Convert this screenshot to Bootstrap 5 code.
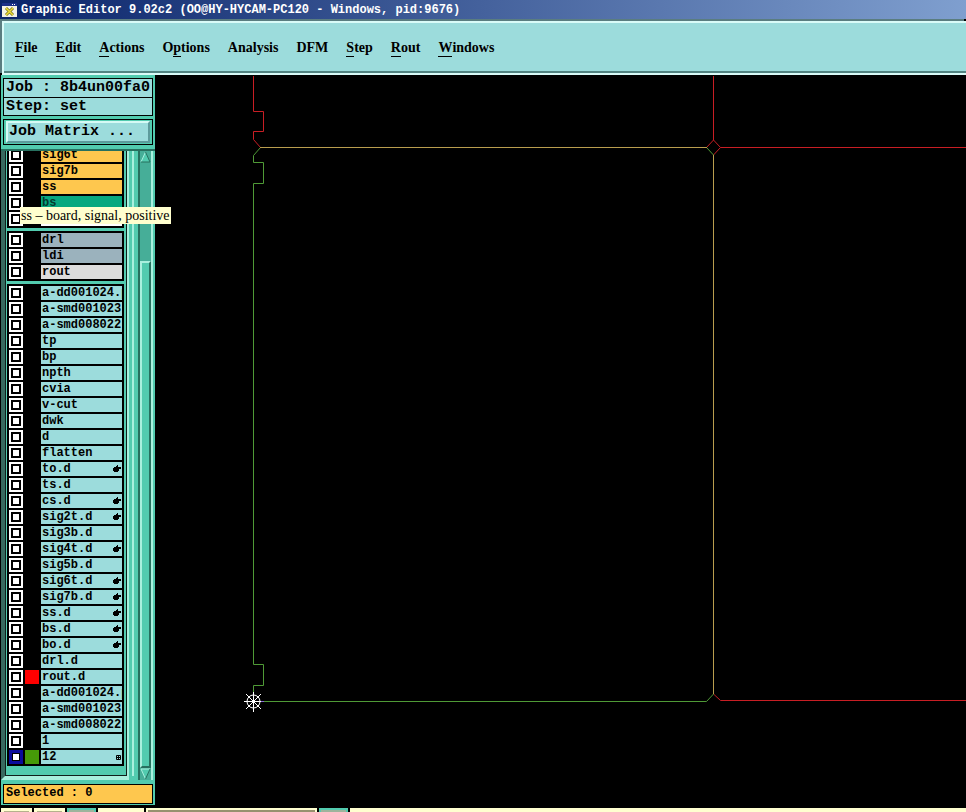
<!DOCTYPE html>
<html lang="en">
<head>
<meta charset="utf-8">
<meta name="viewport" content="width=device-width, initial-scale=1">
<title>Graphic Editor 9.02c2</title>
<link href="https://cdn.jsdelivr.net/npm/bootstrap@5.3.0/dist/css/bootstrap.min.css" rel="stylesheet">
<style>
  :root { --aqua: #9cdcdc; --teal: #52cbaf; --pale: #a9f0de; --deep: #27705f; --amber: #fec74e; }
  body { background: #000; color: #000; font-family: "Liberation Mono", monospace; font-weight: 700; font-size: 12px; line-height: 16px; }
  .titlebar { height: 19px; padding: 0 2px; color: #fff; background: linear-gradient(90deg, #0a246a, #7f9fcf); }
  .menubar { height: 54px; background: var(--aqua); border: 2px solid #d9fbf8; border-right: 0; box-shadow: inset 0 -2px #528482, -2px -2px #5a7d80; margin: 2px 0 0 2px; padding: 0 11px; gap: 18px; }
  .menubar button { font: 700 14px/16px "Liberation Serif", serif; color: #000; }
  .key { display: inline-block; border-bottom: 1px solid #000; line-height: 16px; }
  .side { width: 155px; background: var(--teal); border-left: 1px solid #000; padding: 3px 2px 1px; }
  .info { border: 1px solid #000; background: var(--aqua); font-size: 15px; line-height: 18px; }
  .info div { padding: 0 2px; height: 18px; }
  .info div + div { border-top: 1px solid #000; line-height: 17px; }
  .matrix { border: 1px solid #000; margin-top: 3px; padding: 1px 2px; height: 26px; }
  .matrix button { display: block; background: var(--aqua); border: 2px solid; border-color: #d5faf5 #5d9b9c #5d9b9c #d5faf5; font: 700 15px/18px "Liberation Mono", monospace; padding: 0 1px; }
  .lists { margin: 4px -2px 0; border-top: 2px solid var(--deep); height: 631px; }
  .lists > .pane { margin-left: 0; }
  .pane { width: 128px; border-left: 4px solid #38695f; border-bottom: 4px solid var(--pale); border-right: 2px solid var(--pale); }
  .clip { border: 1px solid #101f1b; border-top: 0; padding: 0 2px 0 1px; overflow: hidden; }
  .group { background: #000; padding: 2px 2px 0; margin-bottom: 3px; }
  .first { margin-top: -5px; }
  .layer { height: 16px; padding-bottom: 2px; gap: 2px; }
  .tick { appearance: none; width: 14px; height: 14px; margin: 0; background: linear-gradient(#fff, #fff) center/6px 6px no-repeat, linear-gradient(#000, #000) center/10px 10px no-repeat, #fff; }
  .tick:checked { background: linear-gradient(#fff, #fff) center/6px 6px no-repeat, linear-gradient(#000, #000) center/8px 8px no-repeat, #0b0b9c; }
  .swatch { width: 14px; height: 14px; }
  .red { background: #f00; } .green { background: #469a08; }
  .cell { background: var(--aqua); height: 14px; padding: 0 1px; line-height: 14px; white-space: nowrap; overflow: hidden; min-width: 0; }
  .amber { background: var(--amber); } .sea { background: #07a87f; color: #033b2f; } .white { background: #fff; }
  .slate { background: #9bb2bd; } .silver { background: #dcdcdc; }
  .rail { width: 5px; border-right: 2px solid var(--pale); margin: 0 4px 4px 0; }
  .scroller { width: 15px; background: #46ae98; border-left: 2px solid var(--deep); border-right: 2px solid var(--pale); }
  .thumb { margin-top: 98px; background: var(--teal); border: 2px solid; border-color: var(--pale) var(--deep) var(--deep) var(--pale); }
  .scroller button { line-height: 0; }
  .chosen { border: 1px solid #000; background: var(--amber); height: 20px; line-height: 17px; margin-top: 4px; padding: 0 2px; }
  .tip { left: 20px; top: 207px; background: #ffffce; font: 400 14px/17px "Liberation Serif", serif; padding: 0 1px; white-space: nowrap; z-index: 2; }
  .shelf { height: 4px; margin-top: 3px; padding-left: 1px; gap: 2px; }
  .shelf div { background: #ffffd0; }
  .shelf .pad { width: 31px; box-shadow: inset 0 3px #ffffd0, inset 3px 0 #ffffd0, inset -3px 0 #ffffd0; background: #b5b28c; }
  .shelf .on { width: 29px; background: #9db49c; border: 2px solid var(--teal); border-bottom: 0; }
  .shelf .blank { width: 46px; }
  .shelf .field { width: 171px; background: #97916f; border: 2px solid #ffffd0; border-bottom: 0; }
</style>
<script src="https://cdn.jsdelivr.net/npm/bootstrap@5.3.0/dist/js/bootstrap.bundle.min.js"></script>
</head>
<body class="d-flex flex-column min-vh-100 overflow-hidden position-relative">
<header class="titlebar d-flex align-items-center text-nowrap">
  <svg class="me-1 flex-shrink-0" width="15" height="14" viewBox="0 0 15 14" aria-hidden="true">
    <path fill="#f3f1e4" d="M0 0h15v14H0z"/><path fill="#1a2f88" d="M0 0h15v3H0z"/><path fill="#fff" d="M10 1h1v1h-1zM12 1h1v1h-1z"/>
    <path d="M4 5l7 7M11 5l-7 7" stroke="#77751b" stroke-width="3"/><path d="M4 5l7 7M11 5l-7 7" stroke="#efdd37" stroke-width="1.5"/>
  </svg>
  <span>Graphic Editor 9.02c2 (OO@HY-HYCAM-PC120 - Windows, pid:9676)</span>
</header>
<nav class="menubar d-flex align-items-center" aria-label="Main menu">
  <button class="border-0 bg-transparent p-0"><span class="key">F</span>ile</button>
  <button class="border-0 bg-transparent p-0"><span class="key">E</span>dit</button>
  <button class="border-0 bg-transparent p-0"><span class="key">A</span>ctions</button>
  <button class="border-0 bg-transparent p-0">O<span class="key">p</span>tions</button>
  <button class="border-0 bg-transparent p-0">Analysis</button>
  <button class="border-0 bg-transparent p-0">DFM</button>
  <button class="border-0 bg-transparent p-0"><span class="key">S</span>tep</button>
  <button class="border-0 bg-transparent p-0"><span class="key">R</span>out</button>
  <button class="border-0 bg-transparent p-0"><span class="key">W</span>indows</button>
</nav>
<main class="d-flex">
  <aside class="side flex-shrink-0">
    <div class="info text-nowrap overflow-hidden"><div>Job : 8b4un00fa0</div><div>Step: set</div></div>
    <div class="matrix"><button class="w-100 text-start">Job Matrix ...</button></div>
    <div class="lists d-flex">
      <div class="pane flex-shrink-0"><div class="clip h-100" id="layers"></div></div>
      <div class="rail flex-shrink-0"></div>
      <div class="scroller d-flex flex-column flex-shrink-0">
        <button class="border-0 bg-transparent p-0" aria-label="Scroll up"><svg width="11" height="12"><path d="M1 11L5.500 1 10 11z" fill="#52cbaf"/><path d="M1 11L5.500 1" stroke="#a9f0de"/><path d="M5.500 1L10 11H1" fill="none" stroke="#27705f"/></svg></button>
        <div class="thumb flex-fill"></div>
        <button class="border-0 bg-transparent p-0" aria-label="Scroll down"><svg width="11" height="12"><path d="M1 1h9L5.500 11z" fill="#52cbaf"/><path d="M5.500 11L1 1h9" fill="none" stroke="#a9f0de"/><path d="M10 1L5.500 11" stroke="#27705f"/></svg></button>
      </div>
    </div>
    <div class="chosen">Selected : 0</div>
  </aside>
  <section class="flex-fill overflow-hidden" aria-label="Board view">
    <svg class="d-block" width="100%" height="100%" fill="none">
      <g transform="translate(-155 -75)">
        <path stroke="#c81e24" d="M253.500 76v35.500h10v20h-10v8l7 8M713.500 76v64l7 7.500h2000M713.500 140l-7 7.500M720.500 147.500l-7 7.500M713.500 694l7 6.500h2000"/>
        <path stroke="#4f9a36" d="M260.500 147.500l-7 8v7h10v21h-10v481h10v21h-10v16h453l7-7.500M706.500 147.500l7 7.500"/>
        <path stroke="#b99d4e" d="M260 147.500h447M713.500 155v539"/>
        <g stroke="#fff"><circle cx="253.500" cy="701.500" r="6.500"/><path d="M253.500 692v20M244 701.500h18M246 694l15 15M261 694l-15 15"/></g>
        <path stroke="#8a68d8" d="M261 701.500h3"/>
      </g>
    </svg>
  </section>
</main>
<div class="shelf d-flex" aria-hidden="true">
  <div class="pad"></div><div class="pad"></div><div class="on"></div><div class="blank"></div><div class="field"></div><div class="on"></div><div class="flex-fill"></div>
</div>
<div class="tip position-absolute" role="tooltip">ss – board, signal, positive</div>
<script>
  // name | cell colour | swatch colour | mark at the right end
  const groups = [
    ["sig6t|amber", "sig7b|amber", "ss|amber", "bs|sea", "|white"],
    ["drl|slate", "ldi|slate", "rout|silver"],
    ["a-dd001024.p", "a-smd001023", "a-smd008022", "tp", "bp", "npth", "cvia", "v-cut", "dwk", "d", "flatten",
     "to.d|||hand", "ts.d", "cs.d|||hand", "sig2t.d|||hand", "sig3b.d", "sig4t.d|||hand", "sig5b.d", "sig6t.d|||hand",
     "sig7b.d|||hand", "ss.d|||hand", "bs.d|||hand", "bo.d|||hand", "drl.d", "rout.d||red", "a-dd001024.p",
     "a-smd001023", "a-smd008022", "1", "12||green|grid"]
  ];
  const marks = {
    hand: '<svg class="flex-shrink-0" width="8" height="8"><path d="M0 3h1V2h2V1h1V0h1v2h3v2H6v2H5v1H1V6H0z"/></svg>',
    grid: '<svg class="flex-shrink-0" width="5" height="5" viewBox="0 0 5 5"><path fill="none" stroke="#000" d="M.5.5h4v4h-4zM2.500 0v5M0 2.500h5"/></svg>'
  };
  document.getElementById("layers").innerHTML = groups.map((rows, g) =>
    `<div class="group${g ? "" : " first"}">` + rows.map(r => {
      const [name, tone = "", swatch = "", mark = ""] = r.split("|");
      return `<label class="layer d-flex"><input class="tick flex-shrink-0" type="checkbox"${swatch === "green" ? " checked" : ""} aria-label="${name || "layer"}">` +
        `<span class="swatch flex-shrink-0 ${swatch}"></span>` +
        `<span class="cell flex-fill d-flex align-items-center ${tone}"><span>${name}</span><span class="ms-auto d-flex">${marks[mark] || ""}</span></span></label>`;
    }).join("") + "</div>").join("");
</script>
</body>
</html>
